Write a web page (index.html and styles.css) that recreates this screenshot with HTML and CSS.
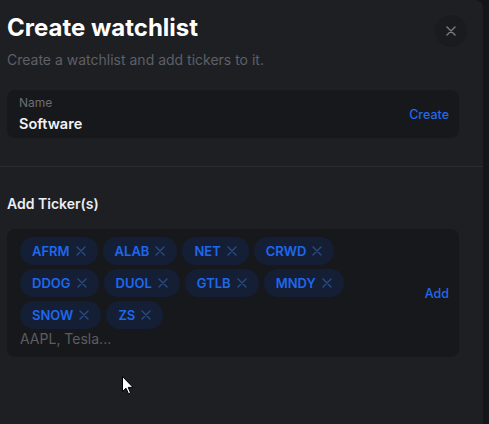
FILE: index.html
```html
<!DOCTYPE html>
<html lang="en">
<head>
<meta charset="utf-8">
<title>Create watchlist</title>
<link rel="stylesheet" href="styles.css">
</head>
<body>
<div class="panel">
  <div class="header">
    <div class="heading">
      <h1 class="title">Create watchlist</h1>
      <p class="subtitle">Create a watchlist and add tickers to it.</p>
    </div>
    <button class="close" aria-label="Close">
      <svg width="10" height="10" viewBox="0 0 10 10"><path d="M1 1L9 9M9 1L1 9" stroke="currentColor" stroke-width="1.5" stroke-linecap="round"/></svg>
    </button>
  </div>

  <div class="field name-field">
    <div class="field-main">
      <div class="label">Name</div>
      <div class="value">Software</div>
    </div>
    <span class="action">Create</span>
  </div>

  <hr class="divider">

  <h2 class="section-title">Add Ticker(s)</h2>

  <div class="field ticker-field">
    <div class="ticker-main">
      <div class="chips">
        <span class="chip">AFRM<svg class="x" viewBox="0 0 10 10"><path d="M1 1L9 9M9 1L1 9"/></svg></span>
        <span class="chip">ALAB<svg class="x" viewBox="0 0 10 10"><path d="M1 1L9 9M9 1L1 9"/></svg></span>
        <span class="chip">NET<svg class="x" viewBox="0 0 10 10"><path d="M1 1L9 9M9 1L1 9"/></svg></span>
        <span class="chip">CRWD<svg class="x" viewBox="0 0 10 10"><path d="M1 1L9 9M9 1L1 9"/></svg></span>
        <span class="chip">DDOG<svg class="x" viewBox="0 0 10 10"><path d="M1 1L9 9M9 1L1 9"/></svg></span>
        <span class="chip">DUOL<svg class="x" viewBox="0 0 10 10"><path d="M1 1L9 9M9 1L1 9"/></svg></span>
        <span class="chip">GTLB<svg class="x" viewBox="0 0 10 10"><path d="M1 1L9 9M9 1L1 9"/></svg></span>
        <span class="chip">MNDY<svg class="x" viewBox="0 0 10 10"><path d="M1 1L9 9M9 1L1 9"/></svg></span>
        <span class="chip">SNOW<svg class="x" viewBox="0 0 10 10"><path d="M1 1L9 9M9 1L1 9"/></svg></span>
        <span class="chip">ZS<svg class="x" viewBox="0 0 10 10"><path d="M1 1L9 9M9 1L1 9"/></svg></span>
      </div>
      <div class="placeholder">AAPL, Tesla...</div>
    </div>
    <span class="action">Add</span>
  </div>
</div>
<svg class="cursor" width="12" height="19" viewBox="0 0 12 19"><path d="M0.5 0.5V15.5L4 12.2L6.5 17.8L8.6 16.9L6.2 11.4H11L0.5 0.5Z" fill="#fff" stroke="#000" stroke-width="1"/></svg>
</body>
</html>
```

FILE: styles.css
```css
* { box-sizing: border-box; }
html, body {
  margin: 0;
  padding: 0;
  height: 100%;
  background: #141518;
  font-family: Inter, "Noto Sans", "Liberation Sans", sans-serif;
  overflow: hidden;
}
.panel {
  width: 483px;
  height: 424px;
  background: #1e1f23;
  border-top-right-radius: 8px;
  padding: 13px 24px 0 7px;
}
.header {
  display: flex;
  align-items: flex-start;
  justify-content: space-between;
}
.title {
  margin: 0;
  font-size: 24px;
  line-height: 30px;
  font-weight: 700;
  color: #ffffff;
}
.subtitle {
  margin: 7px 0 0;
  font-size: 14px;
  line-height: 20px;
  color: #5d6067;
}
.close {
  width: 32px;
  height: 32px;
  margin: 2px -8px 0 0;
  border: 0;
  border-radius: 50%;
  background: #1a1b1e;
  color: #76787e;
  display: flex;
  align-items: center;
  justify-content: center;
  padding: 0;
}
.field {
  display: flex;
  align-items: center;
  background: #17181b;
  border-radius: 8px;
}
.name-field {
  margin-top: 20px;
  height: 48px;
  padding: 0 10px 0 12px;
}
.field-main { flex: 1; }
.label {
  font-size: 12px;
  line-height: 16px;
  color: #6b6d73;
}
.value {
  margin-top: 4px;
  font-size: 14.5px;
  line-height: 18px;
  font-weight: 600;
  color: #f2f3f5;
}
.action {
  font-size: 12.5px;
  font-weight: 500;
  color: #2268f0;
}
.divider {
  margin: 28px -24px 0 -7px;
  border: 0;
  height: 1px;
  background: #2a2b30;
}
.section-title {
  margin: 27px 0 0;
  font-size: 14px;
  line-height: 20px;
  font-weight: 600;
  color: #eceef1;
}
.ticker-field {
  margin-top: 15px;
  padding: 8px 10px 8px 13px;
}
.ticker-main { flex: 1; }
.chips {
  display: flex;
  flex-wrap: wrap;
  gap: 4px 5px;
  padding-right: 40px;
}
.chip {
  display: inline-flex;
  align-items: center;
  height: 28px;
  padding: 0 12px;
  border-radius: 14px;
  background: #141f36;
  color: #1f68ec;
  font-size: 13px;
  font-weight: 600;
}
.x {
  width: 10px;
  height: 10px;
  margin-left: 6px;
  fill: none;
  stroke: #2b4a80;
  stroke-width: 1.4;
  stroke-linecap: round;
}
.placeholder {
  font-size: 14px;
  line-height: 20px;
  color: #5b5d63;
}
.cursor {
  position: absolute;
  left: 122px;
  top: 376px;
}
```
